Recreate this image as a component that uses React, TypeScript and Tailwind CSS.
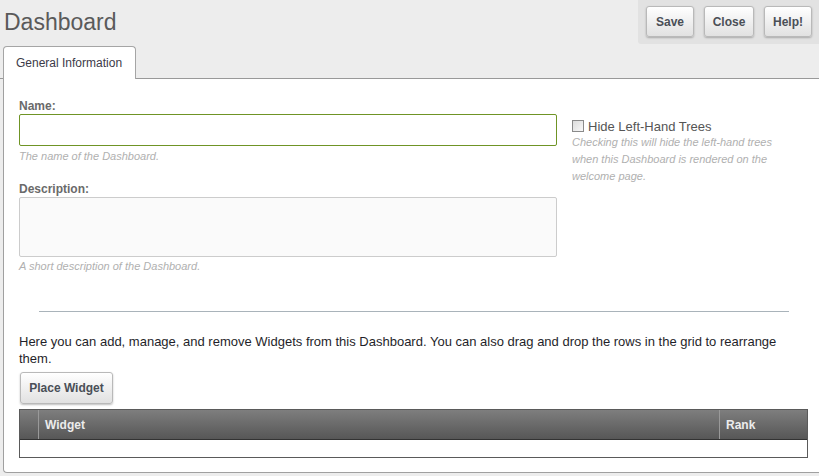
import React from "react";

const btn =
  "h-[31px] rounded-[3px] border border-[#b9b9b9] bg-gradient-to-b from-[#ffffff] to-[#e1e1e1] shadow-[0_1px_2px_rgba(0,0,0,0.25)] text-[12px] font-bold text-[#4a4f57] flex items-center justify-center";

export default function App() {
  return (
    <div className="w-[819px] h-[476px] overflow-hidden bg-[#ededed] font-['Liberation_Sans',Arial,sans-serif]">
      {/* Header */}
      <div className="flex justify-between h-[46px]">
        <h1 className="pl-[4px] pt-[8px] text-[23px] leading-[28px] text-[#5a5a5a]">Dashboard</h1>
        <div className="w-[181px] h-[44px] bg-[#e2e2e2] rounded-bl-[3px] flex items-start gap-[10px] pl-[8px] pt-[6px]">
          <button className={btn + " w-[48px]"}>Save</button>
          <button className={btn + " w-[50px]"}>Close</button>
          <button className={btn + " w-[48px]"}>Help!</button>
        </div>
      </div>

      {/* Tabs */}
      <div className="flex border-b border-[#999] h-[33px]">
        <div className="ml-[3px] w-[133px] h-[33px] -mb-px bg-white border border-b-0 border-[#a5a5a5] rounded-t-[4px] flex items-center pl-[12px] text-[12px] text-[#3c3a48]">
          General Information
        </div>
      </div>

      {/* Panel */}
      <div className="ml-[3px] h-[394px] bg-white border-l border-b border-[#a0a0a0] rounded-bl-[4px] pl-[15px] pt-[20px]">
        <div className="flex">
          <div className="w-[538px]">
            <div className="text-[12px] font-bold text-[#6a6a6a] leading-[14px]">Name:</div>
            <div className="mt-[1px] h-[32px] w-[538px] border border-[#6f9425] rounded-[2px] bg-white"></div>
            <div className="mt-[2px] text-[11px] italic text-[#b0b0b0] leading-[16px]">The name of the Dashboard.</div>
            <div className="mt-[18px] text-[12px] font-bold text-[#6a6a6a] leading-[14px]">Description:</div>
            <div className="mt-[1px] h-[60px] w-[538px] border border-[#cccccc] rounded-[2px] bg-[#fafafa]"></div>
            <div className="mt-[1px] text-[11px] italic text-[#b0b0b0] leading-[16px]">A short description of the Dashboard.</div>
          </div>
          <div className="ml-[15px] pt-[19px] w-[215px]">
            <div className="flex items-center gap-[4px] h-[15px]">
              <div className="w-[12px] h-[12px] border border-[#8a8a8a] bg-gradient-to-br from-[#dcdcdc] to-[#f8f8f8]"></div>
              <span className="text-[13px] text-[#555] leading-[15px] pt-[1px]">Hide Left-Hand Trees</span>
            </div>
            <div className="text-[11px] italic text-[#b0b0b0] leading-[17px] w-[212px] pt-[1px]">
              Checking this will hide the left-hand trees when this Dashboard is rendered on the welcome page.
            </div>
          </div>
        </div>

        <div className="mt-[37px] ml-[20px] mr-[30px] border-t border-[#a9b3ba]"></div>

        <p className="mt-[21px] text-[13px] leading-[17px] text-[#1f1f2a] pr-[10px]">
          Here you can add, manage, and remove Widgets from this Dashboard. You can also drag and drop the rows in the grid to rearrange them.
        </p>

        <button className={btn + " mt-[5px] ml-[1px] w-[93px] h-[32px]"}>Place Widget</button>

        <div className="mt-[5px] w-[789px] border border-[#5a5a5a]">
          <div className="flex h-[30px] bg-gradient-to-b from-[#7e7e7e] to-[#575757] border-b border-[#333]">
            <div className="w-[19px] border-r border-[#999]"></div>
            <div className="flex-1 flex items-center pl-[6px] text-[12px] font-bold text-[#ececec]">Widget</div>
            <div className="w-[88px] border-l border-[#999] flex items-center pl-[6px] text-[12px] font-bold text-[#ececec]">Rank</div>
          </div>
          <div className="h-[17px] bg-white"></div>
        </div>
      </div>
    </div>
  );
}
